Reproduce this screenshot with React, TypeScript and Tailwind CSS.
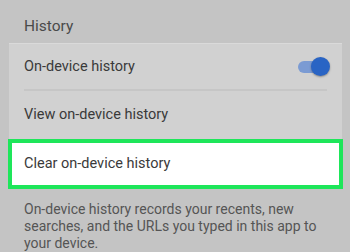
export default function App() {
  return (
    <div
      className="w-[350px] h-[252px] overflow-hidden bg-[#c4c4c4] relative"
      style={{ fontFamily: "Roboto, 'Noto Sans', sans-serif" }}
    >
      <div className="h-[43px] pl-[24px] pt-[17px] text-[15.5px] leading-[18px] text-[#4a4a4a]">
        History
      </div>
      <div className="ml-[9px] w-[333px] bg-[#d1d1d1] border-t border-[#dadada]">
        <div className="h-[45px] flex items-center justify-between pl-[15px] pr-[12px]">
          <span className="text-[14.5px] text-[#3a3a3a]">On-device history</span>
          <div className="relative w-[32px] h-[20px] flex items-center">
            <div className="absolute left-0 w-[24px] h-[12px] rounded-full bg-[#7b9bd3]" />
            <div className="absolute right-0 w-[19px] h-[19px] rounded-full bg-[#2964c4] shadow-[0_1px_2px_rgba(0,0,0,0.35)]" />
          </div>
        </div>
        <div className="mx-[15px] h-[2px] bg-[#c6c6c6]" />
        <div className="h-[48px] flex items-center pl-[15px] text-[14.5px] text-[#3a3a3a]">
          View on-device history
        </div>
      </div>
      <div className="ml-[8px] w-[335px] h-[50px] bg-white border-[4px] border-[#1ee65a] flex items-center pl-[12px] text-[14.5px] text-[#3a3a3a]">
        Clear on-device history
      </div>
      <div className="pl-[24px] pr-[20px] pt-[12px] text-[14px] leading-[17px] text-[#555555]">
        On-device history records your recents, new searches, and the URLs you typed in this app to your device.
      </div>
    </div>
  );
}
